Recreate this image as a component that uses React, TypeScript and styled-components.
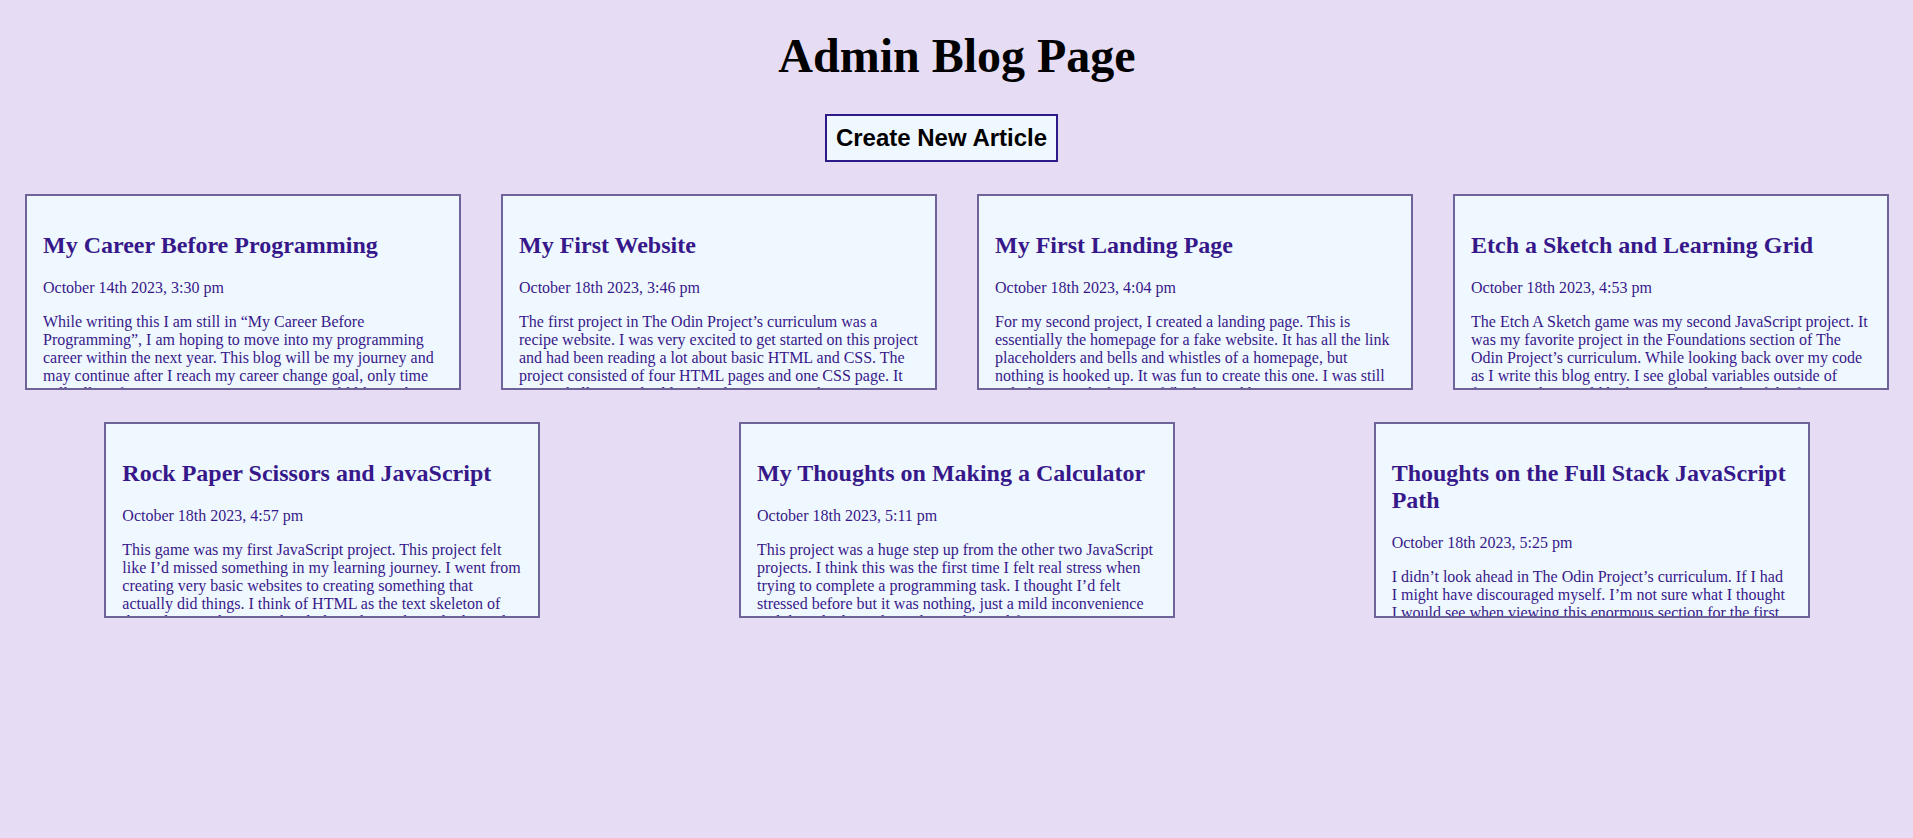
import React from "react";
import styled, { createGlobalStyle } from "styled-components";

const GlobalStyle = createGlobalStyle`
  html, body {
    margin: 0;
    padding: 0;
    background: #e6ddf5;
  }
  body {
    font-family: "Liberation Serif", "Times New Roman", serif;
    min-height: 100vh;
  }
`;

const Page = styled.main`
  display: flex;
  flex-direction: column;
  align-items: center;
  padding: 28px 24px 40px 25px;
  min-height: 100vh;
  box-sizing: border-box;
  background: #e6ddf5;
`;

const Title = styled.h1`
  margin: 0;
  font-family: "Liberation Serif", "Times New Roman", serif;
  font-size: 48px;
  line-height: 56px;
  font-weight: 700;
  color: #000;
`;

const CreateButton = styled.button`
  margin-top: 30px;
  margin-right: 31px;
  padding: 8px 9px;
  border: 2px solid #2c1a88;
  border-radius: 0;
  background: #f0f8ff;
  color: #000;
  font-family: "Liberation Sans", Arial, sans-serif;
  font-size: 24px;
  line-height: 28px;
  font-weight: 700;
  cursor: pointer;
`;

const CardGrid = styled.section`
  margin-top: 32px;
  width: 100%;
  display: flex;
  flex-wrap: wrap;
  justify-content: space-around;
  gap: 32px 40px;
`;

const Card = styled.article`
  width: 400px;
  height: 160px;
  padding: 16px;
  border: 2px solid #6f6499;
  background: #f0f8ff;
  overflow: hidden;
  color: #37188a;
  font-family: "Liberation Serif", "Times New Roman", serif;
  cursor: pointer;
`;

const CardTitle = styled.h2`
  margin: 20px 0;
  font-size: 24px;
  font-weight: 700;
  line-height: normal;
`;

const CardDate = styled.p`
  margin: 16px 0;
  font-size: 16px;
  line-height: normal;
`;

const CardBody = styled.p`
  margin: 16px 0;
  font-size: 16px;
  line-height: normal;
`;

type Post = { title: string; date: string; body: string };

const posts: Post[] = [
  {
    title: "My Career Before Programming",
    date: "October 14th 2023, 3:30 pm",
    body: "While writing this I am still in “My Career Before Programming”, I am hoping to move into my programming career within the next year. This blog will be my journey and may continue after I reach my career change goal, only time will tell. Before I get into programming I would like to share a little about where I am coming from.",
  },
  {
    title: "My First Website",
    date: "October 18th 2023, 3:46 pm",
    body: "The first project in The Odin Project’s curriculum was a recipe website. I was very excited to get started on this project and had been reading a lot about basic HTML and CSS. The project consisted of four HTML pages and one CSS page. It was a challenge to build and style every page the way I wanted.",
  },
  {
    title: "My First Landing Page",
    date: "October 18th 2023, 4:04 pm",
    body: "For my second project, I created a landing page. This is essentially the homepage for a fake website. It has all the link placeholders and bells and whistles of a homepage, but nothing is hooked up. It was fun to create this one. I was still only learning the basics of flexbox and how to position everything.",
  },
  {
    title: "Etch a Sketch and Learning Grid",
    date: "October 18th 2023, 4:53 pm",
    body: "The Etch A Sketch game was my second JavaScript project. It was my favorite project in the Foundations section of The Odin Project’s curriculum. While looking back over my code as I write this blog entry. I see global variables outside of functions that would be better placed inside of the functions that use them.",
  },
  {
    title: "Rock Paper Scissors and JavaScript",
    date: "October 18th 2023, 4:57 pm",
    body: "This game was my first JavaScript project. This project felt like I’d missed something in my learning journey. I went from creating very basic websites to creating something that actually did things. I think of HTML as the text skeleton of the website and CSS as the clothing that makes it look good.",
  },
  {
    title: "My Thoughts on Making a Calculator",
    date: "October 18th 2023, 5:11 pm",
    body: "This project was a huge step up from the other two JavaScript projects. I think this was the first time I felt real stress when trying to complete a programming task. I thought I’d felt stressed before but it was nothing, just a mild inconvenience and the calculator showed me what real frustration was.",
  },
  {
    title: "Thoughts on the Full Stack JavaScript Path",
    date: "October 18th 2023, 5:25 pm",
    body: "I didn’t look ahead in The Odin Project’s curriculum. If I had I might have discouraged myself. I’m not sure what I thought I would see when viewing this enormous section for the first time, but it was a lot more than I expected to find.",
  },
];

export default function App() {
  return (
    <>
      <GlobalStyle />
      <Page>
        <Title>Admin Blog Page</Title>
        <CreateButton type="button">Create New Article</CreateButton>
        <CardGrid>
          {posts.map((post) => (
            <Card key={post.title}>
              <CardTitle>{post.title}</CardTitle>
              <CardDate>{post.date}</CardDate>
              <CardBody>{post.body}</CardBody>
            </Card>
          ))}
        </CardGrid>
      </Page>
    </>
  );
}
